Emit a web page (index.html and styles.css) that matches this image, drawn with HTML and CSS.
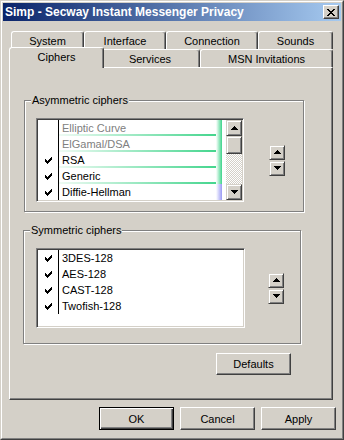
FILE: index.html
```html
<!DOCTYPE html>
<html lang="en">
<head>
  <meta charset="UTF-8">
  <title>Simp - Secway Instant Messenger Privacy</title>
  <link rel="stylesheet" href="styles.css">
</head>
<body>

  <svg width="0" height="0" class="defs">
    <symbol id="check" viewBox="0 0 7 7">
      <path d="M6 0h1v1h-1z M5 1h2v1h-2z M0 2h1v1h-1z M4 2h3v1h-3z M0 3h2v1h-2z M3 3h3v1h-3z M0 4h5v1h-5z M1 5h3v1h-3z M2 6h1v1h-1z"/>
    </symbol>
    <symbol id="up" viewBox="0 0 7 4">
      <path d="M3 0h1v1h1v1h1v1h1v1H0V3h1V2h1V1h1z"/>
    </symbol>
    <symbol id="down" viewBox="0 0 7 4">
      <path d="M0 0h7v1H6v1H5v1H4v1H3V3H2V2H1V1H0z"/>
    </symbol>
  </svg>

  <div class="window">
    <div class="window-inner">

      <div class="titlebar">
        <span class="title">Simp - Secway Instant Messenger Privacy</span>
        <div class="close-btn">
          <svg width="8" height="7" viewBox="0 0 8 7"><path d="M0 0h2v1h-2z M6 0h2v1h-2z M1 1h2v1h-2z M5 1h2v1h-2z M2 2h4v1h-4z M3 3h2v1h-2z M2 4h4v1h-4z M1 5h2v1h-2z M5 5h2v1h-2z M0 6h2v1h-2z M6 6h2v1h-2z"/></svg>
        </div>
      </div>

      <div class="tabs">
        <div class="tab-row">
          <div class="tab tab-system">System</div>
          <div class="tab tab-interface">Interface</div>
          <div class="tab tab-connection">Connection</div>
          <div class="tab tab-sounds">Sounds</div>
        </div>
        <div class="tab-row">
          <div class="tab tab-ciphers selected">Ciphers</div>
          <div class="tab tab-services">Services</div>
          <div class="tab tab-msn">MSN Invitations</div>
        </div>
      </div>

      <div class="panel">

        <div class="group group-asym">
          <span class="group-label">Asymmetric ciphers</span>
          <div class="group-body">
            <div class="listbox listbox-asym">
              <div class="rows">
                <div class="row deco disabled"><span class="check"></span><span class="name">Elliptic Curve</span></div>
                <div class="row deco disabled"><span class="check"></span><span class="name">ElGamal/DSA</span></div>
                <div class="row deco"><span class="check"><svg><use href="#check"/></svg></span><span class="name">RSA</span></div>
                <div class="row deco"><span class="check"><svg><use href="#check"/></svg></span><span class="name">Generic</span></div>
                <div class="row deco focus"><span class="check"><svg><use href="#check"/></svg></span><span class="name">Diffie-Hellman</span></div>
              </div>
              <div class="scrollbar">
                <div class="raised sb-btn"><svg class="arrow"><use href="#up"/></svg></div>
                <div class="raised sb-thumb"></div>
                <div class="sb-track"></div>
                <div class="raised sb-btn"><svg class="arrow"><use href="#down"/></svg></div>
              </div>
            </div>
            <div class="updown updown-asym">
              <div class="raised small-btn"><svg class="arrow"><use href="#up"/></svg></div>
              <div class="raised small-btn"><svg class="arrow"><use href="#down"/></svg></div>
            </div>
          </div>
        </div>

        <div class="group group-sym">
          <span class="group-label">Symmetric ciphers</span>
          <div class="group-body">
            <div class="listbox listbox-sym">
              <div class="rows">
                <div class="row"><span class="check"><svg><use href="#check"/></svg></span><span class="name">3DES-128</span></div>
                <div class="row"><span class="check"><svg><use href="#check"/></svg></span><span class="name">AES-128</span></div>
                <div class="row"><span class="check"><svg><use href="#check"/></svg></span><span class="name">CAST-128</span></div>
                <div class="row"><span class="check"><svg><use href="#check"/></svg></span><span class="name">Twofish-128</span></div>
              </div>
            </div>
            <div class="updown updown-sym">
              <div class="raised small-btn"><svg class="arrow"><use href="#up"/></svg></div>
              <div class="raised small-btn"><svg class="arrow"><use href="#down"/></svg></div>
            </div>
          </div>
        </div>

        <div class="panel-foot">
          <button class="btn">Defaults</button>
        </div>
      </div>

      <div class="dialog-buttons">
        <button class="btn btn-default">OK</button>
        <button class="btn">Cancel</button>
        <button class="btn">Apply</button>
      </div>

    </div>
  </div>

</body>
</html>
```

FILE: styles.css
```css
body {
  margin: 0;
  background: #d4d0c8;
  font-family: "Liberation Sans", Arial, sans-serif;
  font-size: 11px;
  color: #000;
}
.defs {
  position: absolute;
}
.window {
  width: 344px;
  height: 440px;
  box-sizing: border-box;
  border: 1px solid;
  border-color: #d4d0c8 #404040 #404040 #d4d0c8;
  background: #d4d0c8;
}
.window-inner {
  height: 100%;
  box-sizing: border-box;
  border: 1px solid;
  border-color: #fff #808080 #808080 #fff;
  padding: 1px;
}

/* title bar */
.titlebar {
  height: 18px;
  display: flex;
  align-items: center;
  justify-content: space-between;
  padding: 0 2px 0 2px;
  background: linear-gradient(to right, #0a246a, #a6caf0);
}
.title {
  color: #fff;
  font-weight: bold;
  font-size: 12px;
}
.close-btn {
  width: 16px;
  height: 14px;
  box-sizing: border-box;
  border: 1px solid;
  border-color: #fff #404040 #404040 #fff;
  box-shadow: inset -1px -1px #808080;
  background: #d4d0c8;
  display: flex;
  align-items: center;
  justify-content: center;
}
.close-btn svg {
  display: block;
  margin-left: -1px;
}

/* tabs */
.tabs {
  margin: 10px 0 0 8px;
  width: 322px;
}
.tab-row {
  display: flex;
  align-items: flex-start;
  height: 18px;
}
.tab {
  box-sizing: border-box;
  height: 18px;
  border: 1px solid;
  border-bottom: 0;
  border-color: #fff #404040 #fff #fff;
  box-shadow: inset -1px 0 #808080;
  border-radius: 3px 3px 0 0;
  background: #d4d0c8;
  text-align: center;
  padding-top: 2px;
  line-height: 15px;
}
.tab-system { width: 73px; }
.tab-interface { width: 82px; }
.tab-connection { width: 92px; }
.tab-sounds { width: 75px; }
.tab-ciphers { width: 91px; }
.tab-services { width: 98px; }
.tab-msn { width: 133px; }
.tab.selected {
  position: relative;
  z-index: 2;
  height: 21px;
  margin: -2px -2px 0 -2px;
  width: 95px;
}
.tab-ciphers + .tab {
  margin-left: -2px;
  width: 100px;
}

/* panel */
.panel {
  margin-left: 6px;
  width: 324px;
  height: 333px;
  box-sizing: border-box;
  border: 1px solid;
  border-color: #fff #404040 #404040 #fff;
  box-shadow: inset -1px -1px #808080;
  overflow: hidden;
}

.group {
  position: relative;
  box-sizing: border-box;
  border: 1px solid #808080;
  box-shadow: 1px 1px 0 #fff, inset 1px 1px 0 #fff;
}
.group-label {
  position: absolute;
  top: -7px;
  left: 6px;
  padding: 0 1px;
  background: #d4d0c8;
  line-height: 13px;
}
.group-body {
  display: flex;
  align-items: center;
}
.group-asym {
  margin: 32px 0 0 14px;
  width: 280px;
}
.group-asym .group-body {
  padding: 17px 0 9px 11px;
}
.group-sym {
  margin: 18px 0 0 13px;
  width: 278px;
}
.group-sym .group-body {
  padding: 17px 0 15px 12px;
}

/* list boxes */
.listbox {
  display: flex;
  padding: 1px;
  border: 1px solid;
  border-color: #808080 #fff #fff #808080;
  box-shadow: inset 1px 1px #404040, inset -1px -1px #d4d0c8;
  background: #fff;
}
.listbox-asym {
  width: 208px;
  height: 84px;
  box-sizing: border-box;
}
.listbox-sym {
  width: 209px;
  height: 80px;
  box-sizing: border-box;
}
.rows {
  flex: 1;
  overflow: hidden;
  background: #fff;
}
.listbox-asym .rows {
  padding-right: 4px;
}
.row {
  display: flex;
  height: 16px;
}
.check {
  width: 20px;
  flex: none;
  border-right: 1px solid #000;
  display: flex;
  align-items: center;
  justify-content: center;
}
.check svg {
  width: 7px;
  height: 7px;
  margin-left: 1px;
}
.name {
  flex: 1;
  padding-left: 3px;
  line-height: 16px;
  white-space: nowrap;
}
.row.deco .name {
  background:
    linear-gradient(to right, #fff, #3ed48a) right top / 6px 100% no-repeat,
    linear-gradient(to right, #effbf4, #3ed48a) left bottom / 100% 2px no-repeat,
    #fff;
}
.row.deco.focus .name {
  background:
    linear-gradient(to right, #fff, #9a9af4) right top / 6px 100% no-repeat,
    #fff;
}
.row.disabled .name {
  color: #808080;
}

/* scroll bar and small buttons */
.raised {
  box-sizing: border-box;
  border: 1px solid;
  border-color: #d4d0c8 #404040 #404040 #d4d0c8;
  box-shadow: inset 1px 1px #fff, inset -1px -1px #808080;
  background: #d4d0c8;
  display: flex;
  align-items: center;
  justify-content: center;
}
.arrow {
  width: 7px;
  height: 4px;
}
.scrollbar {
  width: 16px;
  display: flex;
  flex-direction: column;
}
.sb-btn {
  height: 16px;
}
.sb-thumb {
  height: 18px;
}
.sb-track {
  flex: 1;
  background: conic-gradient(#d4d0c8 25%, #fff 0 50%, #d4d0c8 0 75%, #fff 0) 0 0 / 2px 2px;
}

.updown {
  display: flex;
  flex-direction: column;
  gap: 1px;
}
.updown-asym {
  margin-left: 25px;
}
.updown-sym {
  margin-left: 23px;
}
.small-btn {
  width: 16px;
  height: 15px;
}

/* push buttons */
.btn {
  width: 75px;
  height: 23px;
  box-sizing: border-box;
  border: 1px solid;
  border-color: #fff #404040 #404040 #fff;
  box-shadow: inset -1px -1px #808080;
  background: #d4d0c8;
  font: inherit;
  color: #000;
  padding: 0;
  border-radius: 0;
}
.btn-default {
  border-color: #000;
  box-shadow: inset 1px 1px #fff, inset -1px -1px #404040, inset -2px -2px #808080;
}
.panel-foot {
  margin: 9px 0 0 206px;
}
.panel-foot .btn {
  height: 22px;
}
.dialog-buttons {
  display: flex;
  justify-content: flex-end;
  gap: 6px;
  margin-top: 7px;
  padding-right: 5px;
}
```
